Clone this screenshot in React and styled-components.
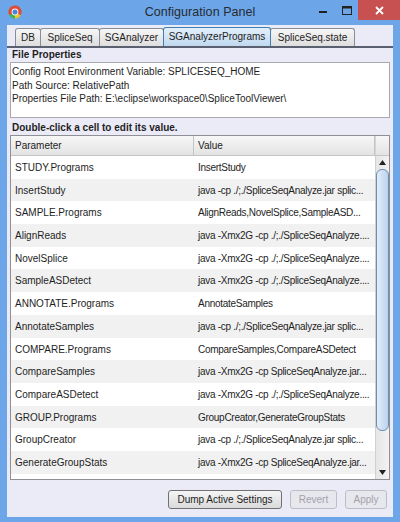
import React from "react";
import styled, { createGlobalStyle, css } from "styled-components";

const Global = createGlobalStyle`
  html, body { margin: 0; padding: 0; background: #6ca6e8; overflow: hidden; }
  * { box-sizing: border-box; }
`;

const Window = styled.div`
  width: 400px;
  height: 522px;
  background: #6ca6e8;
  display: flex;
  flex-direction: column;
  font-family: "Liberation Sans", Arial, sans-serif;
  color: #1e1e1e;
`;

const TitleBar = styled.div`
  height: 25px;
  display: grid;
  grid-template-columns: 1fr auto 1fr;
  align-items: start;
`;

const AppIcon = styled.div`
  padding: 5px 0 0 8px;
  height: 25px;
  display: flex;
`;

const Title = styled.div`
  font-size: 12.5px;
  line-height: 25px;
  color: #262a30;
  letter-spacing: 0.05px;
`;

const Controls = styled.div`
  justify-self: end;
  display: flex;
`;

const CtrlBox = styled.div`
  width: ${(p) => p.$w}px;
  height: 20px;
  display: flex;
  align-items: center;
  justify-content: center;
  background: ${(p) => p.$bg || "transparent"};
`;

const Body = styled.div`
  flex: 1;
  margin: 0 7px 5px;
  background: #ebebf8;
  display: flex;
  flex-direction: column;
`;

const TabStrip = styled.div`
  display: flex;
  padding: 3px 0 0 8px;
  height: 21px;
`;

const Tab = styled.div`
  width: ${(p) => p.$w}px;
  height: 18px;
  margin-right: -1px;
  font-size: 10px;
  line-height: 17px;
  text-align: center;
  border: 1px solid #8a8d95;
  border-bottom: none;
  border-radius: 3px 3px 0 0;
  background: linear-gradient(#f6f6f6, #dedede);
  ${(p) =>
    p.$active &&
    css`
      position: relative;
      z-index: 1;
      margin-top: -1px;
      height: 19px;
      border-color: #3f7fb3;
      background: linear-gradient(#e4f0fb, #bfd8ee);
    `}
`;

const Panel = styled.div`
  flex: 1;
  border-top: 2px solid #5a6070;
  padding: 0 3px;
  display: flex;
  flex-direction: column;
`;

const SectionLabel = styled.div`
  font-size: 10px;
  font-weight: bold;
  height: 14px;
  line-height: 14px;
  padding-left: 2px;
  margin-top: ${(p) => p.$mt || 0}px;
`;

const InfoBox = styled.div`
  height: 56px;
  background: #fff;
  border: 1px solid #a8a8b0;
  padding: 2px 1px;
  font-size: 10px;
  line-height: 13.5px;
`;

const Table = styled.div`
  height: 345px;
  border: 1px solid #8f9096;
  background: #fff;
  display: grid;
  grid-template-columns: 1fr 14px;
  grid-template-rows: 20px 1fr;
`;

const HeaderRow = styled.div`
  display: grid;
  grid-template-columns: 183px 1fr;
  background: linear-gradient(#f7f7f7, #e3e3e3);
  border-bottom: 1px solid #c4c4c4;
`;

const HeaderCell = styled.div`
  font-size: 10px;
  line-height: 19px;
  padding-left: 4px;
  border-right: 1px solid #c4c4c4;
  color: #222;
`;

const Corner = styled.div`
  background: linear-gradient(#f7f7f7, #e3e3e3);
  border-bottom: 1px solid #c4c4c4;
  border-left: 1px solid #d4d4d4;
`;

const Rows = styled.div`
  overflow: hidden;
`;

const Row = styled.div`
  display: grid;
  grid-template-columns: 183px 1fr;
  height: 22.7px;
  background: ${(p) => (p.$alt ? "#f1f1f1" : "#ffffff")};
`;

const Cell = styled.div`
  font-size: 10px;
  line-height: 24px;
  padding-left: 4px;
  white-space: nowrap;
  overflow: hidden;
  color: #1e1e1e;
  letter-spacing: ${(p) => (p.$value ? "-0.28px" : "0")};
`;

const ScrollBar = styled.div`
  background: linear-gradient(to right, #e6e6e6, #f2f2f2);
  border-left: 1px solid #d0d0d0;
  display: flex;
  flex-direction: column;
  align-items: center;
`;

const Arrow = styled.div`
  height: 13px;
  width: 100%;
  display: flex;
  align-items: center;
  justify-content: center;
`;

const Thumb = styled.div`
  width: 13px;
  height: 262px;
  border: 1px solid #6e8cb0;
  border-radius: 6px;
  background: linear-gradient(to right, #e2edf9, #bcd3ec);
`;

const Track = styled.div`
  flex: 1;
`;

const ButtonRow = styled.div`
  flex: 1;
  display: flex;
  justify-content: flex-end;
  align-items: flex-start;
  gap: 8px;
  padding: 10px 3px 0 0;
`;

const Button = styled.div`
  height: 19px;
  width: ${(p) => p.$w}px;
  font-size: 10px;
  line-height: 17px;
  text-align: center;
  border-radius: 3px;
  border: 1px solid #707070;
  background: linear-gradient(#f5f5f5, #dadada);
  color: #1e1e1e;
  ${(p) =>
    p.$disabled &&
    css`
      border-color: #bdbdc4;
      background: #e7e7ee;
      color: #a3a3a8;
    `}
`;

const rows = [
  ["STUDY.Programs", "InsertStudy"],
  ["InsertStudy", "java -cp ./;./SpliceSeqAnalyze.jar splic..."],
  ["SAMPLE.Programs", "AlignReads,NovelSplice,SampleASD..."],
  ["AlignReads", "java -Xmx2G -cp ./;./SpliceSeqAnalyze...."],
  ["NovelSplice", "java -Xmx2G -cp ./;./SpliceSeqAnalyze...."],
  ["SampleASDetect", "java -Xmx2G -cp ./;./SpliceSeqAnalyze...."],
  ["ANNOTATE.Programs", "AnnotateSamples"],
  ["AnnotateSamples", "java -cp ./;./SpliceSeqAnalyze.jar splic..."],
  ["COMPARE.Programs", "CompareSamples,CompareASDetect"],
  ["CompareSamples", "java -Xmx2G -cp SpliceSeqAnalyze.jar..."],
  ["CompareASDetect", "java -Xmx2G -cp ./;./SpliceSeqAnalyze...."],
  ["GROUP.Programs", "GroupCreator,GenerateGroupStats"],
  ["GroupCreator", "java -cp ./;./SpliceSeqAnalyze.jar splic..."],
  ["GenerateGroupStats", "java -Xmx2G -cp SpliceSeqAnalyze.jar..."],
];

const tabs = [
  ["DB", 26],
  ["SpliceSeq", 60],
  ["SGAnalyzer", 65],
  ["SGAnalyzerPrograms", 108, true],
  ["SpliceSeq.state", 85],
];

const ChromeIcon = () => (
  <svg width="14" height="14" viewBox="0 0 14 14">
    <circle cx="7" cy="7" r="6.5" fill="#3cb54a" />
    <path d="M7 0.5 A6.5 6.5 0 0 1 12.63 10.25 L7 7 Z" fill="#e24a3b" />
    <path d="M7 0.5 A6.5 6.5 0 0 0 1.37 10.25 L7 7 Z" fill="#e24a3b" />
    <path d="M12.63 10.25 A6.5 6.5 0 0 1 7 13.5 L7 7 Z" fill="#f2c230" />
    <circle cx="7" cy="7" r="3.4" fill="#f4f4f4" />
    <circle cx="7" cy="7" r="2.5" fill="#4a86d8" />
  </svg>
);

export default function App() {
  return (
    <Window>
      <Global />
      <TitleBar>
        <AppIcon>
          <ChromeIcon />
        </AppIcon>
        <Title>Configuration Panel</Title>
        <Controls>
          <CtrlBox $w={23}>
            <svg width="9" height="9" viewBox="0 0 9 9">
              <rect x="0" y="5" width="8" height="2" fill="#222" />
            </svg>
          </CtrlBox>
          <CtrlBox $w={23}>
            <svg width="10" height="9" viewBox="0 0 10 9">
              <rect x="0.5" y="0.5" width="9" height="8" fill="none" stroke="#222" />
              <rect x="0.5" y="0.5" width="9" height="2" fill="#222" />
            </svg>
          </CtrlBox>
          <CtrlBox $w={42} $bg="#c75050">
            <svg width="9" height="9" viewBox="0 0 9 9">
              <path d="M1 1 L8 8 M8 1 L1 8" stroke="#fff" strokeWidth="1.8" />
            </svg>
          </CtrlBox>
        </Controls>
      </TitleBar>
      <Body>
        <TabStrip>
          {tabs.map(([t, w, a]) => (
            <Tab key={t} $w={w} $active={a}>
              {t}
            </Tab>
          ))}
        </TabStrip>
        <Panel>
          <SectionLabel>File Properties</SectionLabel>
          <InfoBox>
            <div>Config Root Environment Variable: SPLICESEQ_HOME</div>
            <div>Path Source: RelativePath</div>
            <div>Properties File Path: E:\eclipse\workspace0\SpliceToolViewer\</div>
          </InfoBox>
          <SectionLabel $mt={3}>Double-click a cell to edit its value.</SectionLabel>
          <Table>
            <HeaderRow>
              <HeaderCell>Parameter</HeaderCell>
              <HeaderCell>Value</HeaderCell>
            </HeaderRow>
            <Corner />
            <Rows>
              {rows.map(([k, v], i) => (
                <Row key={k} $alt={i % 2 === 1}>
                  <Cell>{k}</Cell>
                  <Cell $value>{v}</Cell>
                </Row>
              ))}
            </Rows>
            <ScrollBar>
              <Arrow>
                <svg width="7" height="5" viewBox="0 0 7 5">
                  <path d="M3.5 0 L7 5 L0 5 Z" fill="#222" />
                </svg>
              </Arrow>
              <Thumb />
              <Track />
              <Arrow>
                <svg width="7" height="5" viewBox="0 0 7 5">
                  <path d="M0 0 L7 0 L3.5 5 Z" fill="#222" />
                </svg>
              </Arrow>
            </ScrollBar>
          </Table>
          <ButtonRow>
            <Button $w={114}>Dump Active Settings</Button>
            <Button $w={47} $disabled>
              Revert
            </Button>
            <Button $w={42} $disabled>
              Apply
            </Button>
          </ButtonRow>
        </Panel>
      </Body>
    </Window>
  );
}
